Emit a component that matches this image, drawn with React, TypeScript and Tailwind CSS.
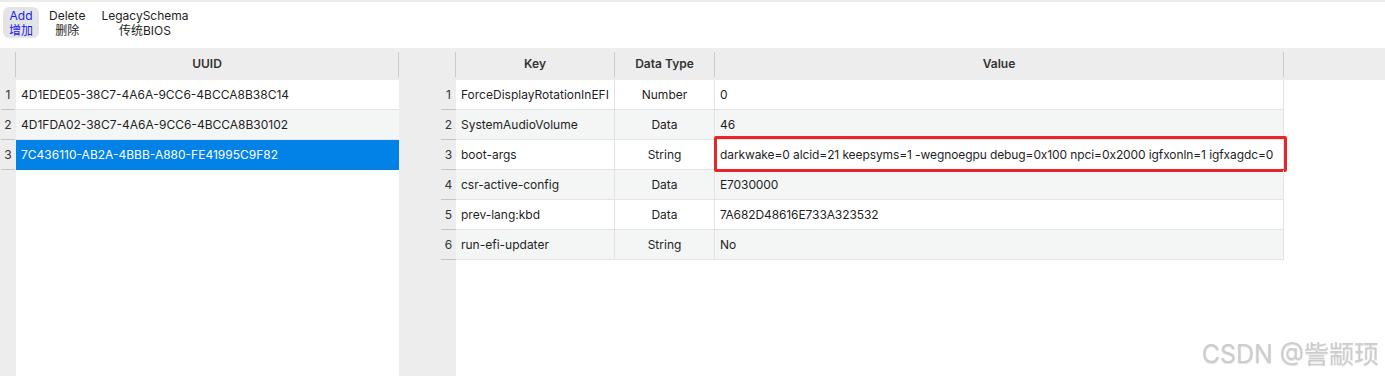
import React from "react";

const uuids = [
  "4D1EDE05-38C7-4A6A-9CC6-4BCCA8B38C14",
  "4D1FDA02-38C7-4A6A-9CC6-4BCCA8B30102",
  "7C436110-AB2A-4BBB-A880-FE41995C9F82",
];

const entries = [
  { k: "ForceDisplayRotationInEFI", t: "Number", v: "0" },
  { k: "SystemAudioVolume", t: "Data", v: "46" },
  {
    k: "boot-args",
    t: "String",
    v: "darkwake=0 alcid=21 keepsyms=1 -wegnoegpu debug=0x100 npci=0x2000 igfxonln=1 igfxagdc=0",
  },
  { k: "csr-active-config", t: "Data", v: "E7030000" },
  { k: "prev-lang:kbd", t: "Data", v: "7A682D48616E733A323532" },
  { k: "run-efi-updater", t: "String", v: "No" },
];

function Divider() {
  return <span className="w-px h-[25px] bg-[#cacaca] shrink-0" />;
}

function ToolButton({
  top,
  bottom,
  active,
}: {
  top: string;
  bottom: string;
  active?: boolean;
}) {
  return (
    <div
      className={
        "flex flex-col items-center justify-center px-[6px] h-[31px] rounded-[6px] text-[12px] leading-[15px] " +
        (active ? "bg-[#e4e4e4] text-[#1a1aff]" : "text-[#1e1e1e]")
      }
    >
      <span>{top}</span>
      <span>{bottom}</span>
    </div>
  );
}

export default function App() {
  return (
    <div className="relative w-[1385px] h-[376px] overflow-hidden bg-white font-[Inter,'Noto_Sans_CJK_SC',sans-serif] text-[#1f1f1f] flex flex-col">
      {/* toolbar */}
      <div className="h-[48px] shrink-0 flex flex-col">
        <div className="h-[2px] bg-[#ebebeb]" />
        <div className="flex items-start gap-[4px] pl-[3px] pt-[5px]">
          <ToolButton top="Add" bottom="增加" active />
          <ToolButton top="Delete" bottom="删除" />
          <ToolButton top="LegacySchema" bottom="传统BIOS" />
        </div>
      </div>

      {/* main */}
      <div className="flex-1 flex bg-[#ededed]">
        {/* left panel */}
        <div className="w-[399px] flex flex-col">
          <div className="h-[32px] flex items-center text-[12px] font-semibold text-[#333]">
            <div className="w-[16px] flex justify-end">
              <Divider />
            </div>
            <div className="flex-1 flex items-center">
              <span className="flex-1 text-center">UUID</span>
              <Divider />
            </div>
          </div>
          <div className="flex-1 flex">
            <div className="w-[16px] flex flex-col">
              {uuids.map((_, i) => (
                <div key={i} className="h-[30px] flex flex-col">
                  <div className="h-[29px] flex items-center justify-center text-[12px] text-[#333]">
                    {i + 1}
                  </div>
                  <div className="h-px mx-[1px] bg-[#c4c4c4]" />
                </div>
              ))}
            </div>
            <div className="flex-1 bg-white flex flex-col">
              {uuids.map((u, i) => (
                <div
                  key={u}
                  className={
                    "h-[30px] flex items-center pl-[5px] text-[12px] border-b " +
                    (i === 2
                      ? "bg-[#0281e7] text-white border-[#0281e7]"
                      : i === 1
                      ? "bg-[#f4f5f5] border-[#e3e3e3]"
                      : "bg-white border-[#e3e3e3]")
                  }
                >
                  {u}
                </div>
              ))}
            </div>
          </div>
        </div>

        {/* right panel */}
        <div className="flex-1 flex flex-col">
          <div className="h-[32px] flex items-center text-[12px] font-semibold text-[#333]">
            <div className="w-[57px] flex justify-end">
              <Divider />
            </div>
            <div className="w-[159px] flex items-center">
              <span className="flex-1 text-center">Key</span>
              <Divider />
            </div>
            <div className="w-[100px] flex items-center">
              <span className="flex-1 text-center">Data Type</span>
              <Divider />
            </div>
            <div className="w-[569px] flex items-center">
              <span className="flex-1 text-center">Value</span>
              <Divider />
            </div>
          </div>
          <div className="flex-1 flex">
            <div className="w-[42px]" />
            <div className="w-[15px] flex flex-col">
              {entries.map((_, i) => (
                <div key={i} className="h-[30px] flex flex-col">
                  <div className="h-[29px] flex items-center justify-center text-[12px] text-[#333]">
                    {i + 1}
                  </div>
                  <div className="h-px bg-[#c4c4c4]" />
                </div>
              ))}
            </div>
            <div className="flex-1 bg-white flex flex-col">
              {entries.map((e, i) => (
                <div
                  key={e.k}
                  className={
                    "w-[828px] h-[30px] flex text-[12px] border-b border-[#e3e3e3] " +
                    (i % 2 === 1 ? "bg-[#f4f5f5]" : "bg-white")
                  }
                >
                  <div className="w-[159px] flex items-center pl-[5px] border-r border-[#e3e3e3] whitespace-nowrap">
                    {e.k}
                  </div>
                  <div className="w-[100px] flex items-center justify-center border-r border-[#e3e3e3]">
                    {e.t}
                  </div>
                  <div className="relative w-[569px] flex items-center pl-[5px] border-r border-[#e3e3e3] whitespace-nowrap tracking-[-0.1px]">
                    {e.v}
                    {i === 2 && (
                      <div className="absolute top-[-4px] bottom-[-3px] left-[-1px] right-[-4px] border-[3px] border-[#e8262a] rounded-[2px]" />
                    )}
                  </div>
                </div>
              ))}
            </div>
          </div>
        </div>
      </div>

      {/* watermark */}
      <div className="absolute right-[6px] bottom-[9px] text-[25px] leading-none text-[#cdcdcd] [text-shadow:0_1px_1px_rgba(0,0,0,0.12)]">
        CSDN @訾颛顼
      </div>
    </div>
  );
}
